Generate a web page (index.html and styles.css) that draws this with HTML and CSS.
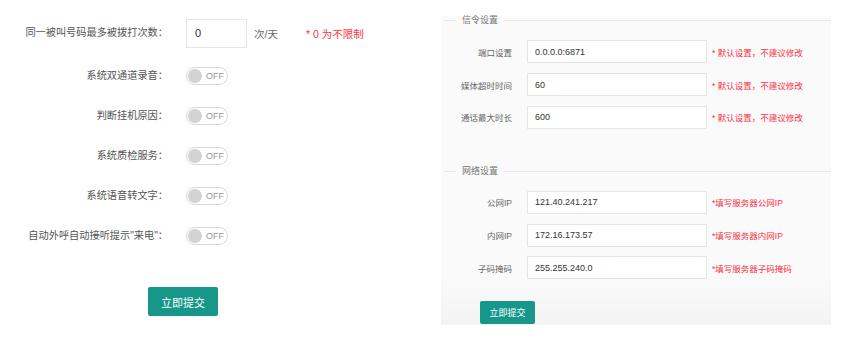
FILE: index.html
```html
<!DOCTYPE html>
<html lang="zh-CN">
<head>
    <meta charset="UTF-8">
    <meta name="viewport" content="width=device-width, initial-scale=1.0">
    <title>系统设置</title>
    <link rel="stylesheet" href="styles.css">
</head>

<body>
    <div class="page">
        <!-- 左侧：呼叫设置 -->
        <form class="call-form">
            <div class="row first">
                <label class="label">同一被叫号码最多被拨打次数：</label>
                <input class="num" type="text" value="0">
                <span class="unit">次/天</span>
                <span class="tip">* 0 为不限制</span>
            </div>
            <div class="row">
                <label class="label">系统双通道录音：</label>
                <span class="switch"><i></i>OFF</span>
            </div>
            <div class="row">
                <label class="label">判断挂机原因：</label>
                <span class="switch"><i></i>OFF</span>
            </div>
            <div class="row">
                <label class="label">系统质检服务：</label>
                <span class="switch"><i></i>OFF</span>
            </div>
            <div class="row">
                <label class="label">系统语音转文字：</label>
                <span class="switch"><i></i>OFF</span>
            </div>
            <div class="row">
                <label class="label">自动外呼自动接听提示"来电"：</label>
                <span class="switch"><i></i>OFF</span>
            </div>
            <button class="btn btn-left" type="button">立即提交</button>
        </form>

        <!-- 右侧：服务器设置 -->
        <form class="server-form">
            <div class="legend"><span>信令设置</span></div>
            <div class="group">
                <div class="item">
                    <label>端口设置</label>
                    <input type="text" value="0.0.0.0:6871">
                    <span class="hint">* 默认设置，不建议修改</span>
                </div>
                <div class="item">
                    <label>媒体超时时间</label>
                    <input type="text" value="60">
                    <span class="hint">* 默认设置，不建议修改</span>
                </div>
                <div class="item">
                    <label>通话最大时长</label>
                    <input type="text" value="600">
                    <span class="hint">* 默认设置，不建议修改</span>
                </div>
            </div>

            <div class="legend second"><span>网络设置</span></div>
            <div class="group">
                <div class="item">
                    <label>公网IP</label>
                    <input type="text" value="121.40.241.217">
                    <span class="hint">*填写服务器公网IP</span>
                </div>
                <div class="item">
                    <label>内网IP</label>
                    <input type="text" value="172.16.173.57">
                    <span class="hint">*填写服务器内网IP</span>
                </div>
                <div class="item">
                    <label>子码掩码</label>
                    <input type="text" value="255.255.240.0">
                    <span class="hint">*填写服务器子码掩码</span>
                </div>
            </div>
            <button class="btn btn-right" type="button">立即提交</button>
        </form>
    </div>
</body>

</html>
```

FILE: styles.css
```css
body {
    margin: 0;
    background: #fff;
    font-family: "Liberation Sans", "Noto Sans CJK SC", sans-serif;
    color: #666;
}

input,
button {
    font-family: inherit;
    outline: none;
}

.page {
    display: flex;
    width: 857px;
    height: 341px;
}

/* 左侧 */
.call-form {
    width: 441px;
    padding-top: 12px;
    box-sizing: border-box;
}

.call-form .row {
    display: flex;
    align-items: center;
    height: 40px;
}

.call-form .row.first {
    height: 42px;
    margin-bottom: 2px;
}

.call-form .label {
    width: 168px;
    margin-right: 18px;
    text-align: right;
    font-size: 10.2px;
    line-height: 14px;
    color: #555;
    white-space: nowrap;
}

.call-form .num {
    width: 61px;
    height: 29px;
    box-sizing: border-box;
    border: 1px solid #e6e6e6;
    padding: 0 8px;
    font-size: 11px;
    color: #333;
}

.call-form .unit {
    margin-left: 7px;
    font-size: 10.5px;
    color: #666;
}

.call-form .tip {
    margin-left: 28px;
    font-size: 10.5px;
    color: #fb3344;
}

.switch {
    display: flex;
    align-items: center;
    width: 42px;
    height: 18px;
    box-sizing: border-box;
    border: 1px solid #d9d9d9;
    border-radius: 10px;
    font-size: 9px;
    color: #999;
}

.switch i {
    width: 14px;
    height: 14px;
    margin: 0 4px 0 1px;
    border-radius: 50%;
    background-color: #d2d2d2;
}

.btn {
    display: block;
    border: 0;
    border-radius: 2px;
    background-color: #16978a;
    color: #fff;
    cursor: pointer;
    padding: 0;
}

.btn-left {
    width: 70px;
    height: 29px;
    margin: 31px 0 0 148px;
    font-size: 11px;
}

/* 右侧 */
.server-form {
    width: 390px;
    height: 309px;
    margin-top: 16px;
    background: linear-gradient(#fafafa 85%, #f3f3f3);
    font-size: 8.5px;
}

.legend {
    display: flex;
    align-items: center;
    height: 9px;
    padding-left: 3px;
    color: #777;
    font-size: 9px;
}

.legend::before,
.legend::after {
    content: "";
    height: 1px;
    background-color: #e6e6e6;
}

.legend::before {
    width: 12px;
}

.legend::after {
    flex: 1;
}

.legend span {
    padding: 0 6px;
    line-height: 9px;
}

.legend.second {
    margin-top: 33px;
}

.group {
    margin-top: 10.5px;
}

.item {
    display: flex;
    align-items: center;
    height: 32.7px;
}

.item label {
    width: 71px;
    margin-right: 15px;
    text-align: right;
    color: #666;
    white-space: nowrap;
}

.item input {
    width: 180px;
    height: 23px;
    box-sizing: border-box;
    border: 1px solid #e6e6e6;
    padding: 0 7px;
    background-color: #fff;
    font-size: 9px;
    color: #333;
}

.item .hint {
    margin-left: 5px;
    color: #fb3344;
    white-space: nowrap;
}

.btn-right {
    width: 55px;
    height: 23px;
    margin: 17px 0 0 39px;
    font-size: 9px;
}
```
